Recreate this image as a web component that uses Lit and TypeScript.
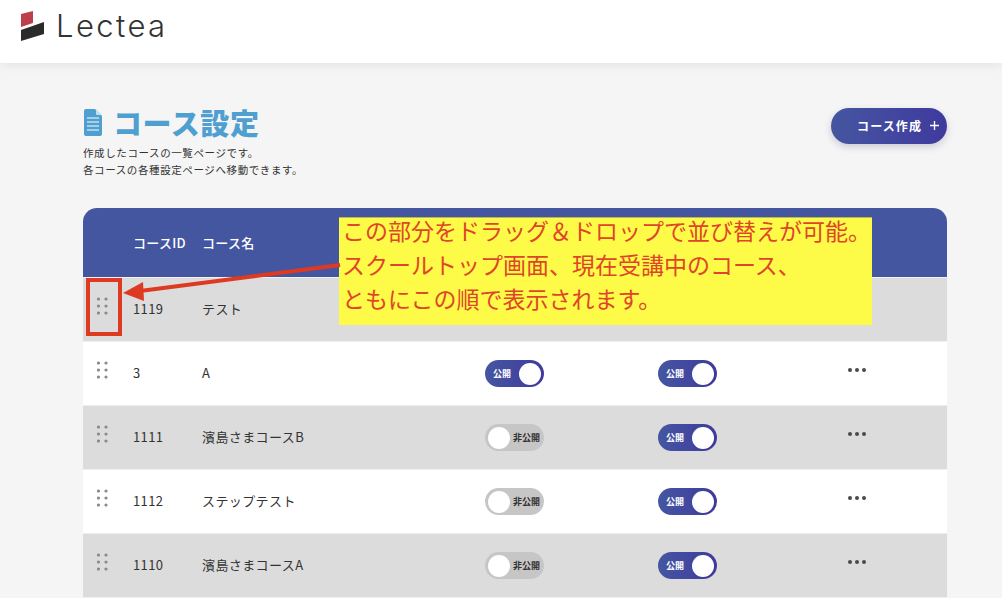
import { LitElement, html, css, svg } from 'lit'
import { customElement } from 'lit/decorators.js'

type Course = { id: string; name: string; first: boolean | null; second: boolean | null; menu: boolean }

const courses: Course[] = [
  { id: '1119', name: 'テスト', first: null, second: null, menu: false },
  { id: '3', name: 'A', first: true, second: true, menu: true },
  { id: '1111', name: '濱島さまコースB', first: false, second: true, menu: true },
  { id: '1112', name: 'ステップテスト', first: false, second: true, menu: true },
  { id: '1110', name: '濱島さまコースA', first: false, second: true, menu: true },
]

const gripDots = [0, 7, 14].map(
  (y) => svg`<circle cx="1.5" cy=${y + 2} r="1.6"></circle><circle cx="9" cy=${y + 2} r="1.6"></circle>`
)

@customElement('app-root')
export class AppRoot extends LitElement {
  static styles = css`
    :host {
      display: block;
      position: relative;
      height: 598px;
      overflow: hidden;
      background: #f5f5f5;
      font-family: 'Noto Sans CJK JP', 'Noto Sans', sans-serif;
      color: #333;
    }

    .topbar {
      height: 63px;
      background: #fff;
      box-shadow: 0 2px 10px rgba(60, 70, 90, 0.1);
      display: flex;
      align-items: flex-start;
      padding: 11px 0 0 21px;
      box-sizing: border-box;
      gap: 12px;
    }
    .logo-text {
      font-family: Inter, sans-serif;
      font-size: 31px;
      font-weight: 300;
      line-height: 30px;
      letter-spacing: 2.4px;
      color: #333;
    }

    .content {
      padding: 44px 55px 0 83px;
    }

    .head {
      display: flex;
      justify-content: space-between;
      align-items: flex-start;
      height: 101px;
    }
    .title-row {
      display: flex;
      align-items: center;
      gap: 11px;
      height: 30px;
    }
    .title-row svg {
      margin-left: 1px;
    }
    h1 {
      margin: 0;
      font-size: 29px;
      line-height: 30px;
      font-weight: 900;
      letter-spacing: 0.6px;
      color: #4f9fd0;
    }
    .lead {
      margin: 7px 0 0;
      font-size: 10.5px;
      line-height: 17px;
      letter-spacing: 0.6px;
      color: #333;
    }

    .create {
      width: 116px;
      height: 36px;
      margin-top: 1px;
      border-radius: 18px;
      background: linear-gradient(90deg, #4556a0, #3f3a9e);
      box-shadow: 0 3px 7px rgba(60, 60, 110, 0.22);
      color: #fff;
      font-size: 12px;
      font-weight: 700;
      letter-spacing: 1.1px;
      display: flex;
      align-items: center;
      justify-content: flex-end;
      gap: 8px;
      padding: 0 8px 2px 0;
      box-sizing: border-box;
    }

    .table {
      border-radius: 14px 14px 0 0;
      overflow: hidden;
    }
    .row {
      display: grid;
      grid-template-columns: 50px 69px 283px 173px 189px 1fr;
      align-items: center;
      height: 64px;
      font-size: 13px;
      letter-spacing: 0.4px;
      background: #fff;
      border-bottom: 1px solid #eee;
      box-sizing: border-box;
    }
    .row.even {
      background: #dcdcdc;
    }
    .row.thead {
      height: 70px;
      background: #4556a0;
      color: #fff;
      font-weight: 500;
      letter-spacing: 0.3px;
      border-bottom: 1px solid #f2f2f2;
    }
    .cell {
      margin-top: -2px;
    }
    .grip {
      display: block;
      margin: -8px 0 0 14px;
      fill: #8a8a8a;
    }
    .more {
      display: flex;
      gap: 3px;
      margin: -8px 0 0 1px;
    }
    .more i {
      width: 4px;
      height: 4px;
      border-radius: 50%;
      background: #4a4a4a;
    }

    .toggle {
      width: 59px;
      height: 27px;
      border-radius: 14px;
      display: flex;
      align-items: center;
      box-sizing: border-box;
      padding: 0 3px;
      font-size: 9px;
      font-weight: 700;
      letter-spacing: 0;
    }
    .toggle.on {
      background: linear-gradient(90deg, #4556a0, #3f3a9e);
      color: #fff;
      justify-content: space-between;
      padding-left: 8px;
    }
    .toggle.off {
      background: #c6c6c6;
      color: #333;
      gap: 3px;
    }
    .knob {
      width: 22px;
      height: 22px;
      border-radius: 50%;
      background: #fff;
    }

    /* annotation pasted over the screenshot */
    .note {
      position: absolute;
      left: 339px;
      top: 217px;
      width: 533px;
      height: 108px;
      box-sizing: border-box;
      padding-left: 3px;
      background: #fdfb47;
      color: #e0452a;
      font-size: 23px;
      white-space: nowrap;
      border-top: 1px solid #b9b84a;
    }
    .note div {
      margin-top: -5px;
      line-height: 34px;
    }
    .marker {
      position: absolute;
      left: 86px;
      top: 278px;
      width: 36px;
      height: 58px;
      box-sizing: border-box;
      border: 4px solid #de3a22;
    }
    .arrow {
      position: absolute;
      left: 120px;
      top: 260px;
    }
  `

  private renderToggle(on: boolean | null) {
    if (on === null) return html`<span></span>`
    return on
      ? html`<div class="toggle on"><span>公開</span><span class="knob"></span></div>`
      : html`<div class="toggle off"><span class="knob"></span><span>非公開</span></div>`
  }

  render() {
    return html`
      <header class="topbar">
        <svg width="23" height="30" viewBox="0 0 23 30">
          <path d="M0 3 L12 0 V12 L0 16 Z" fill="#bd3f4c"></path>
          <path d="M0 19 L23 11 V23 L0 30 Z" fill="#2b2b2b"></path>
        </svg>
        <span class="logo-text">Lectea</span>
      </header>

      <main class="content">
        <div class="head">
          <div>
            <div class="title-row">
              <svg width="18" height="27" viewBox="0 0 18 27">
                <path d="M2 0 H11 L18 7 V25 Q18 27 16 27 H2 Q0 27 0 25 V2 Q0 0 2 0 Z" fill="#4f9fd0"></path>
                <path d="M12 0 L18 6 H13 Q12 6 12 5 Z" fill="#bfe0f2"></path>
                <path d="M3 9 H15 M3 13 H15 M3 17 H15 M3 21 H15" stroke="#fff" stroke-width="1"></path>
              </svg>
              <h1>コース設定</h1>
            </div>
            <p class="lead">作成したコースの一覧ページです。<br />各コースの各種設定ページへ移動できます。</p>
          </div>
          <div class="create">
            <span>コース作成</span>
            <svg width="9" height="9" viewBox="0 0 10 10">
              <path d="M5 0 V10 M0 5 H10" stroke="#fff" stroke-width="1.5"></path>
            </svg>
          </div>
        </div>

        <div class="table">
          <div class="row thead">
            <span></span><span>コースID</span><span>コース名</span><span></span><span></span><span></span>
          </div>
          ${courses.map(
            (c, i) => html`
              <div class="row ${i % 2 === 0 ? 'even' : ''}">
                <svg class="grip" width="11" height="18" viewBox="0 0 11 18">${gripDots}</svg>
                <span class="cell">${c.id}</span>
                <span class="cell">${c.name}</span>
                ${this.renderToggle(c.first)} ${this.renderToggle(c.second)}
                ${c.menu ? html`<div class="more"><i></i><i></i><i></i></div>` : html`<span></span>`}
              </div>
            `
          )}
        </div>
      </main>

      <div class="note">
        <div>この部分をドラッグ&#xFF06;ドロップで並び替えが可能。<br />スクールトップ画面、現在受講中のコース、<br />ともにこの順で表示されます。</div>
      </div>
      <div class="marker"></div>
      <svg class="arrow" width="222" height="44" viewBox="0 0 222 44">
        <path d="M220 5 L20 31" stroke="#de3a22" stroke-width="4"></path>
        <path d="M3 33 L23 22 L24 41 Z" fill="#de3a22"></path>
      </svg>
    `
  }
}

declare global {
  interface HTMLElementTagNameMap {
    'app-root': AppRoot
  }
}
